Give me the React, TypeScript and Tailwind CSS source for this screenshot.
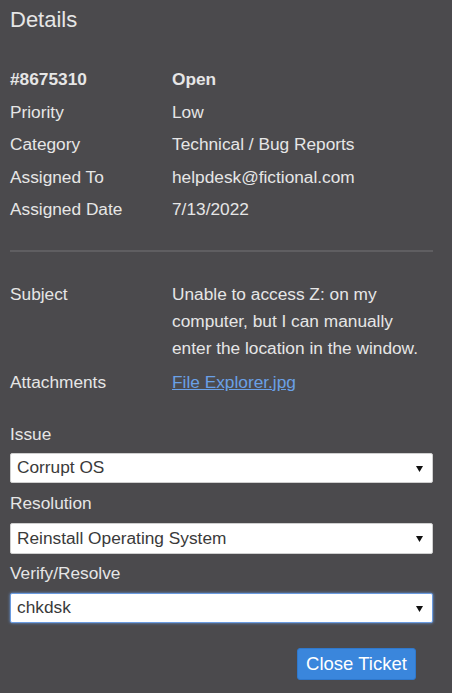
import React from "react";

function Row({ label, value, bold }: { label: string; value: string; bold?: boolean }) {
  return (
    <div className={`flex h-[32.5px] items-center ${bold ? "font-bold" : ""}`}>
      <div className="w-[162px]">{label}</div>
      <div>{value}</div>
    </div>
  );
}

function Select({ value, focused }: { value: string; focused?: boolean }) {
  return (
    <div
      className={`flex h-full items-center justify-between bg-white rounded-[2px] pl-[6px] pr-[9px] text-[#3a3a3a] border ${
        focused ? "border-[#6a9be0] shadow-[0_0_3px_#6a9be0]" : "border-[#cfcfcf]"
      }`}
    >
      <span>{value}</span>
      <svg width="7" height="7" viewBox="0 0 7 7">
        <polygon points="0,1 7,1 3.5,7" fill="#111" />
      </svg>
    </div>
  );
}

export default function App() {
  return (
    <div className="w-[452px] h-[693px] bg-[#4b4a4d] pl-[10px] pr-[19px] text-[#e6e6e6] text-[17.3px] font-['Liberation_Sans',Arial,sans-serif]">
      <div className="pt-[8px] text-[22px] leading-[24px]">Details</div>
      <div className="mt-[31.75px]">
        <Row label="#8675310" value="Open" bold />
        <Row label="Priority" value="Low" />
        <Row label="Category" value="Technical / Bug Reports" />
        <Row label="Assigned To" value="helpdesk@fictional.com" />
        <Row label="Assigned Date" value="7/13/2022" />
      </div>
      <div className="mt-[24px] h-[2px] bg-[#5f5e61]" />
      <div className="mt-[28.5px] flex leading-[27px]">
        <div className="w-[162px]">Subject</div>
        <div className="w-[255px]">
          Unable to access Z: on my computer, but I can manually enter the location in the window.
        </div>
      </div>
      <div className="mt-[7px] flex leading-[27px]">
        <div className="w-[162px]">Attachments</div>
        <a className="text-[#6aa0e6] underline">File Explorer.jpg</a>
      </div>
      <div className="mt-[25px] leading-[27px]">Issue</div>
      <div className="mt-[5.5px] h-[30px]">
        <Select value="Corrupt OS" />
      </div>
      <div className="mt-[6.5px] leading-[27px]">Resolution</div>
      <div className="mt-[6.5px] h-[31px]">
        <Select value="Reinstall Operating System" />
      </div>
      <div className="mt-[5.5px] leading-[27px]">Verify/Resolve</div>
      <div className="mt-[6.5px] h-[30px]">
        <Select value="chkdsk" focused />
      </div>
      <div className="mt-[25px] flex justify-end pr-[17px]">
        <button className="h-[32px] w-[119px] rounded-[3px] bg-[#3a86dc] text-white text-[18.5px] border border-[#2f78cc]">
          Close Ticket
        </button>
      </div>
    </div>
  );
}
